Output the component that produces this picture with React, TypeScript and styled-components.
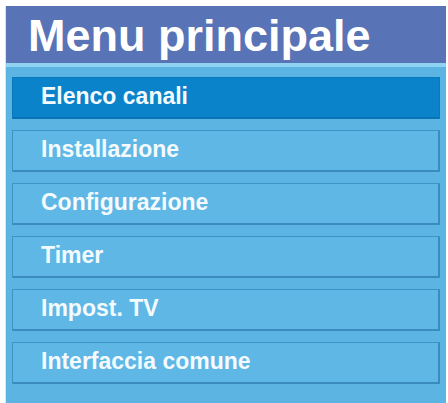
import React from 'react'
import styled, { createGlobalStyle } from 'styled-components'

const GlobalStyle = createGlobalStyle`
  html, body {
    margin: 0;
    padding: 0;
    background: #ffffff;
  }
  body {
    font-family: "Liberation Sans", Arial, sans-serif;
  }
`

const Panel = styled.div`
  margin: 6px 2px 0 5px;
  width: 441px;
  height: 397px;
  display: flex;
  flex-direction: column;
  border-left: 1px solid #d6e6f2;
  box-sizing: border-box;
`

const TitleBar = styled.div`
  height: 57px;
  background: #5873b6;
  display: flex;
  align-items: center;
  padding-left: 22px;
  padding-top: 2px;
  box-sizing: border-box;
`

const Title = styled.h1`
  margin: 0;
  color: #ffffff;
  font-size: 45px;
  font-weight: bold;
  line-height: 1;
`

const MenuArea = styled.div`
  flex: 1;
  background: #5cb4e2;
  border-top: 4px solid #8fd2f2;
  padding: 10px 6px 0 6px;
  display: flex;
  flex-direction: column;
  gap: 11px;
`

const Item = styled.div<{ $selected?: boolean }>`
  height: 42px;
  box-sizing: border-box;
  display: flex;
  align-items: center;
  padding: 0 0 3px 28px;
  background: ${p => (p.$selected ? '#0a83cb' : '#5fb7e5')};
  border: ${p => (p.$selected ? '1px solid #0a78bd' : '1px solid #3e93c5')};
  border-bottom: ${p => (p.$selected ? '2px solid #0873b5' : '2px solid #3a8cbf')};
  border-right: ${p => (p.$selected ? '1px solid #0a78bd' : '2px solid #3a8cbf')};
  border-radius: 1px;
  color: #f4fbff;
  font-size: 23px;
  font-weight: bold;
`

const items = [
  'Elenco canali',
  'Installazione',
  'Configurazione',
  'Timer',
  'Impost. TV',
  'Interfaccia comune',
]

const App: React.FC = () => {
  return (
    <>
      <GlobalStyle />
      <Panel>
        <TitleBar>
          <Title>Menu principale</Title>
        </TitleBar>
        <MenuArea>
          {items.map((label, i) => (
            <Item key={label} $selected={i === 0}>
              {label}
            </Item>
          ))}
        </MenuArea>
      </Panel>
    </>
  )
}

export default App
